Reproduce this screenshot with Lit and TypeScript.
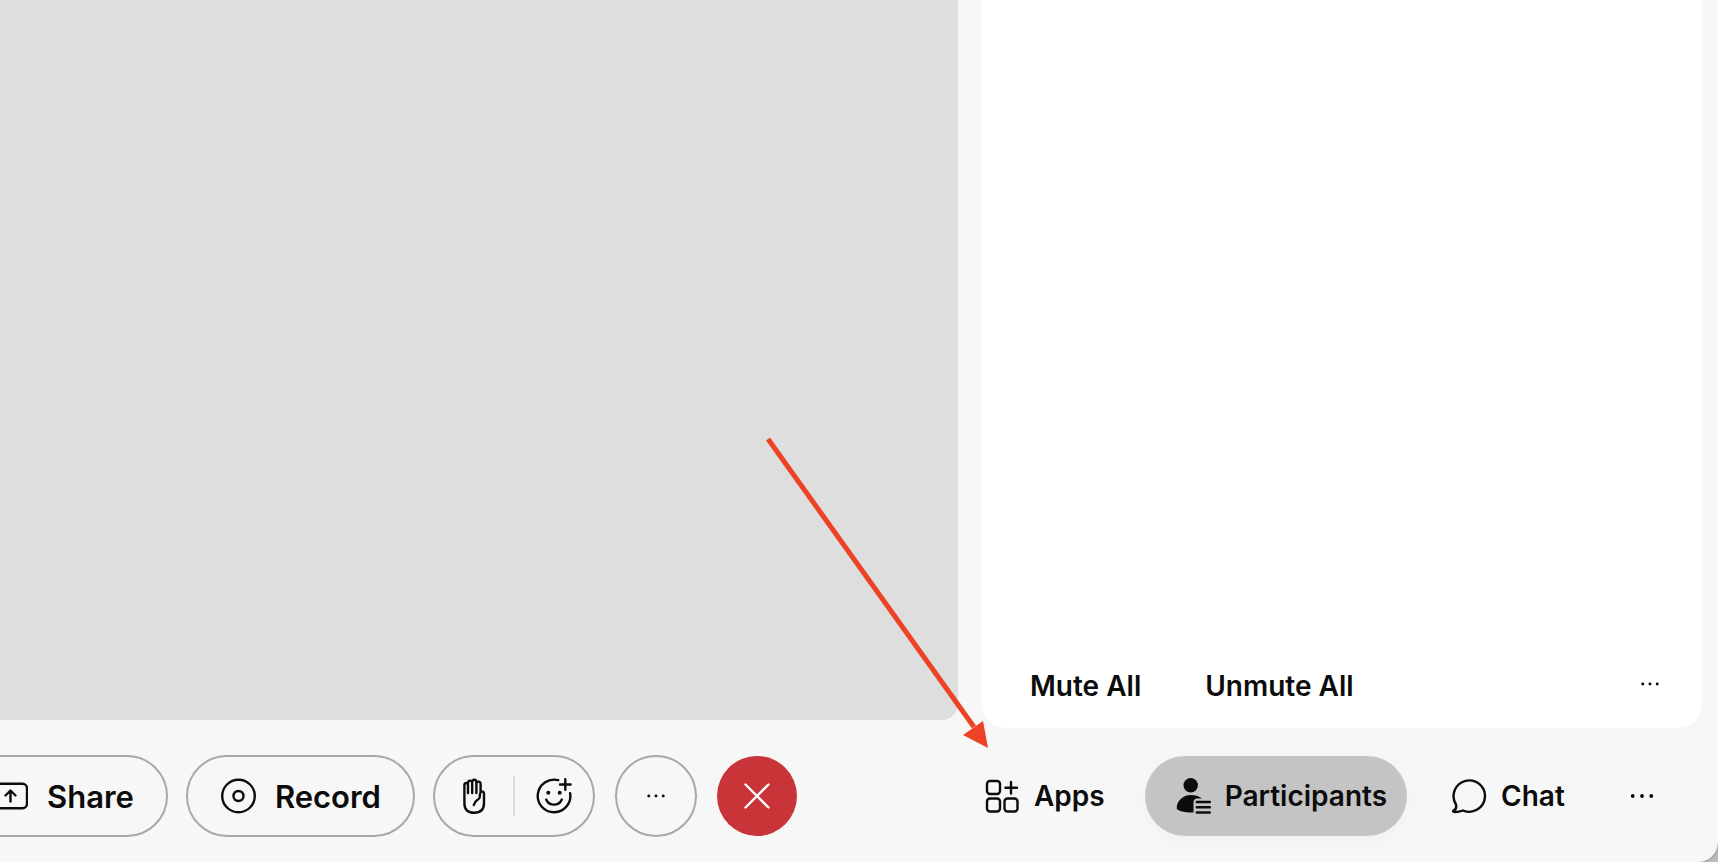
import { LitElement, html, css, svg } from "lit";
import { customElement } from "lit/decorators.js";

const shareIcon = svg`<svg class="icon" viewBox="0 0 36 36"><rect x="2" y="5.700" width="33" height="24.600" rx="4.500"/><path d="M18.500 23.500V13M13.500 17.500l5-5 5 5"/></svg>`;
const recordIcon = svg`<svg class="icon" viewBox="0 0 36 36"><circle cx="18.500" cy="18" r="16.300"/><circle cx="18.500" cy="18" r="5"/></svg>`;
const handIcon = svg`<svg class="icon" viewBox="0 0 36 36"><path d="M8.400 25V7q0-2 1.800-2t1.800 2v8M12 15V5q0-2.400 2-2.400t2.200 2.400v10M16.200 15V4.200q0-2.400 2.100-2.400t2.100 2.400V15M20.400 15V6q0-2.400 2.100-2.400T24.600 6v8M23.800 19q0-5.500 2.300-5.500t1.900 3.500V25q0 9.800-9.800 9.800T8.400 25M23.800 17v2q0 1.500-2.500 3t-3.500 5"/></svg>`;
const smileIcon = svg`<svg class="icon" viewBox="0 0 36 36"><path d="M22.200 2.200A16.300 16.300 0 1 0 34.100 15.200M10.200 21.500a8.500 8.500 0 0 0 15.600 0M29.300 1.200v10.600M24 6.500h10.600"/><circle class="solid" cx="12.300" cy="14.700" r="2"/><circle class="solid" cx="23.700" cy="14.700" r="2"/></svg>`;
const closeIcon = svg`<svg class="icon" viewBox="0 0 36 36"><path d="M6.500 6.500l23 23M29.500 6.500l-23 23"/></svg>`;
const appsIcon = svg`<svg class="icon" viewBox="0 0 36 36"><rect x="3" y="3" width="13" height="13" rx="3"/><rect x="3" y="20.500" width="13" height="13" rx="3"/><rect x="20.500" y="20.500" width="13" height="13" rx="3"/><path d="M27 4v11.500M21.500 9.700h11.500"/></svg>`;
const peopleIcon = svg`<svg class="icon" viewBox="0 0 36 36"><circle class="solid" cx="15.700" cy="7.300" r="7.200"/><path class="solid" d="M27 20.500C24 18 20 17 15.700 17 8 17 1.700 23 1.700 30 1.700 32.500 8 34.500 18.500 34.500V24.500Q18.500 20.800 22 20.500Z"/><path d="M21.800 24h13M21.800 29.300h13M21.800 34.500h13"/></svg>`;
const chatIcon = svg`<svg class="icon" viewBox="0 0 36 36"><path d="M5 26.500A15.700 15.700 0 1 1 12 32.500Q8 34 4 34 1.500 34 2.500 32.500 6 31 5 26.500Z"/></svg>`;
const dots = svg`<svg class="icon" viewBox="0 0 36 36"><circle class="solid" cx="8.700" cy="18" r="1.900"/><circle class="solid" cx="18" cy="18" r="1.900"/><circle class="solid" cx="27.300" cy="18" r="1.900"/></svg>`;

@customElement("app-root")
export class AppRoot extends LitElement {
  static styles = css`
    :host { display: block; background: #bdbdbd; font-family: Inter, "Liberation Sans", sans-serif; color: #0c0c0c; }
    * { box-sizing: border-box; }
    .window { position: relative; display: grid; grid-template-columns: minmax(0, 1fr) 720px; grid-template-rows: 1fr auto; column-gap: 24px; min-height: 100vh; padding-right: 16px; background: #f7f7f7; border-bottom-right-radius: 20px; box-shadow: 0 0 3px #777; overflow: hidden; }
    .stage { background: #dedede; border-bottom-right-radius: 16px; margin-bottom: 8px; }
    .panel { display: flex; align-items: flex-end; background: #fff; border-radius: 0 0 24px 24px; padding: 0 38px 24px 48px; }
    .actions { display: flex; align-items: flex-start; flex: 1; gap: 64px; }
    button { font: inherit; color: inherit; background: none; border: 0; padding: 0; margin: 0; display: flex; align-items: center; justify-content: center; }
    .text { font-size: 28px; line-height: 36px; font-weight: 600; }
    .push { margin-left: auto; }
    .icon { width: 36px; height: 36px; flex: none; fill: none; stroke: currentColor; stroke-width: 2.4; stroke-linecap: round; stroke-linejoin: round; }
    .solid { fill: currentColor; stroke: none; }
    .small .icon { width: 28px; height: 28px; }
    .actions .small { height: 32px; }
    .controls, .tabs { display: flex; align-items: center; height: 134px; padding-top: 2px; }
    .controls { gap: 18px; margin-left: -42px; }
    .meeting { display: flex; align-items: center; gap: 20px; }
    .pill { height: 82px; border: 2px solid #a8a8a8; border-radius: 41px; padding: 0 32px; gap: 19px; font-size: 31px; font-weight: 600; }
    .group { display: flex; align-items: center; height: 82px; width: 162px; border: 2px solid #a8a8a8; border-radius: 41px; }
    .group button { flex: 1; height: 40px; }
    .group button + button { border-left: 2px solid #dcdcdc; }
    .round { width: 82px; height: 82px; border: 2px solid #a8a8a8; border-radius: 50%; }
    .end { width: 80px; height: 80px; border-radius: 50%; background: #c93438; color: #fff; }
    .tabs { gap: 40px; padding-left: 2px; padding-right: 42px; }
    .tab { height: 80px; border-radius: 40px; gap: 14px; font-size: 28px; font-weight: 600; }
    .active { padding: 0 20px 0 30px; background: #c4c4c4; box-shadow: 0 4px 16px rgba(0, 0, 0, .03); }
    .chat { padding-left: 4px; }
    .arrow { position: absolute; right: 730px; bottom: 114px; width: 222px; height: 311px; fill: #ee4226; stroke: #ee4226; pointer-events: none; }
  `;

  render() {
    return html`
      <div class="window">
        <main class="stage"></main>
        <aside class="panel">
          <div class="actions">
            <button class="text">Mute All</button>
            <button class="text">Unmute All</button>
            <button class="small push" aria-label="More participant options">${dots}</button>
          </div>
        </aside>
        <div class="controls">
          <button class="pill">${shareIcon}<span>Share</span></button>
          <button class="pill">${recordIcon}<span>Record</span></button>
          <div class="meeting">
            <div class="group">
              <button aria-label="Raise hand">${handIcon}</button>
              <button aria-label="Reactions">${smileIcon}</button>
            </div>
            <button class="round small" aria-label="More options">${dots}</button>
            <button class="end" aria-label="Leave meeting">${closeIcon}</button>
          </div>
        </div>
        <nav class="tabs">
          <button class="tab">${appsIcon}<span>Apps</span></button>
          <button class="tab active" aria-pressed="true">${peopleIcon}<span>Participants</span></button>
          <button class="tab chat">${chatIcon}<span>Chat</span></button>
          <button class="tab push" aria-label="More panels">${dots}</button>
        </nav>
        <svg class="arrow" viewBox="0 0 222 311"><path d="M2 2L208 290" stroke-width="5"/><path stroke="none" d="M222 311L197 298 217 284Z"/></svg>
      </div>
    `;
  }
}
